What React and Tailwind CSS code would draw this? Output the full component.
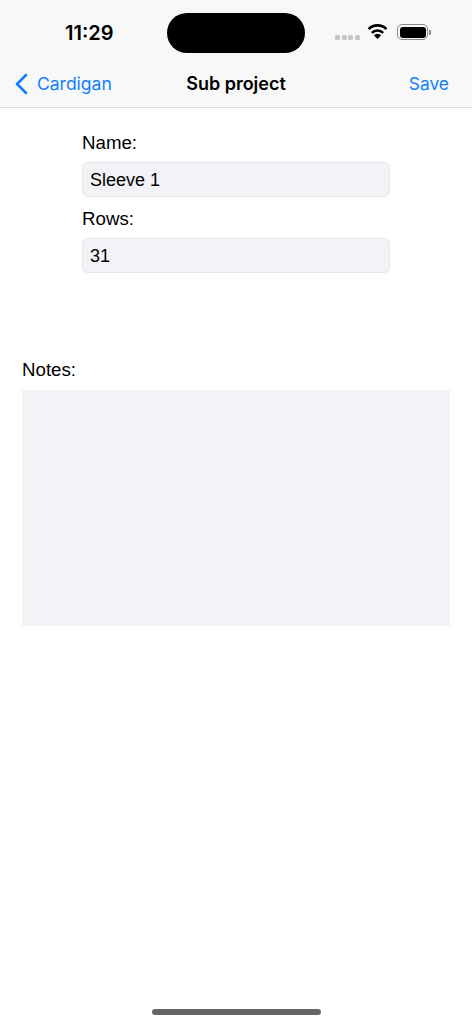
import React from "react";

function StatusBar() {
  return (
    <div className="relative h-[64px] flex items-center">
      <span className="ml-[65px] mt-[1px] text-[20px] font-semibold text-black font-['Inter',sans-serif]">11:29</span>
      <div className="absolute left-[167px] top-[13px] w-[138px] h-[40px] rounded-[20px] bg-black" />
      <div className="absolute left-[335px] top-[35px] flex gap-[1.500px]">
        <span className="w-[5px] h-[5px] rounded-[1.500px] bg-[#c6c6c6]" />
        <span className="w-[5px] h-[5px] rounded-[1.500px] bg-[#c6c6c6]" />
        <span className="w-[5px] h-[5px] rounded-[1.500px] bg-[#c6c6c6]" />
        <span className="w-[5px] h-[5px] rounded-[1.500px] bg-[#c6c6c6]" />
      </div>
      <svg className="absolute left-[367px] top-[23px]" width="21" height="17" viewBox="0 0 21 17" fill="none">
        <path d="M1.600 6.100A12.600 12.600 0 0 1 19.400 6.100" stroke="#000" strokeWidth="2.700" />
        <path d="M4.840 9.840A8 8 0 0 1 16.160 9.840" stroke="#000" strokeWidth="2.700" />
        <path d="M10.500 16L6.800 12.300A5.200 5.200 0 0 1 14.200 12.300Z" fill="#000" />
      </svg>
      <div className="absolute left-[397px] top-[24px] flex items-center">
        <div className="w-[31px] h-[16px] rounded-[5px] border border-[#8a8a8a] p-[1.500px]">
          <div className="w-full h-full rounded-[3px] bg-black" />
        </div>
        <div className="ml-[1px] w-[1.500px] h-[5px] rounded-r-[1px] bg-[#8a8a8a]" />
      </div>
    </div>
  );
}

function NavBar() {
  return (
    <div className="relative h-[43px] flex items-center justify-between pb-[3px] pl-[14px] pr-[23px] font-['Inter',sans-serif]">
      <div className="flex items-center gap-[9px] text-[#0f7fff]">
        <svg width="14" height="22" viewBox="0 0 14 22" fill="none">
          <path d="M12 2 L3 11 L12 20" stroke="#0f7fff" strokeWidth="2.600" strokeLinecap="round" strokeLinejoin="round" />
        </svg>
        <span className="text-[17.500px]">Cardigan</span>
      </div>
      <span className="absolute left-0 right-0 pb-[1px] text-center text-[18px] font-semibold text-black">Sub project</span>
      <span className="text-[17.400px] text-[#0f7fff]">Save</span>
    </div>
  );
}

function Field({ label, value }) {
  return (
    <div className="flex flex-col">
      <label className="h-[27px] text-[18.700px] leading-[27px] text-black">{label}</label>
      <div className="mt-[6px] h-[35px] flex items-center rounded-[6px] border border-[#e4e4e9] bg-[#f2f2f7] px-[7px] pt-[2px] text-[18px] text-black">
        {value}
      </div>
    </div>
  );
}

export default function App() {
  return (
    <div className="relative w-[472px] h-[1024px] overflow-hidden bg-white font-['Liberation_Sans',sans-serif]">
      <header className="h-[108px] bg-[#f8f8f8] border-b border-[#dcdcdc]">
        <StatusBar />
        <NavBar />
      </header>

      <div className="mx-[82px] mt-[21px] flex flex-col gap-[8px]">
        <Field label="Name:" value="Sleeve 1" />
        <Field label="Rows:" value="31" />
      </div>

      <div className="mx-[22px] mt-[83px]">
        <div className="h-[27px] text-[18.700px] leading-[27px] text-black">Notes:</div>
        <div className="mt-[7px] h-[236px] bg-[#f2f2f7]" />
      </div>

      <div className="absolute left-[152px] bottom-[9px] w-[169px] h-[6px] rounded-full bg-[#666666]" />
    </div>
  );
}
